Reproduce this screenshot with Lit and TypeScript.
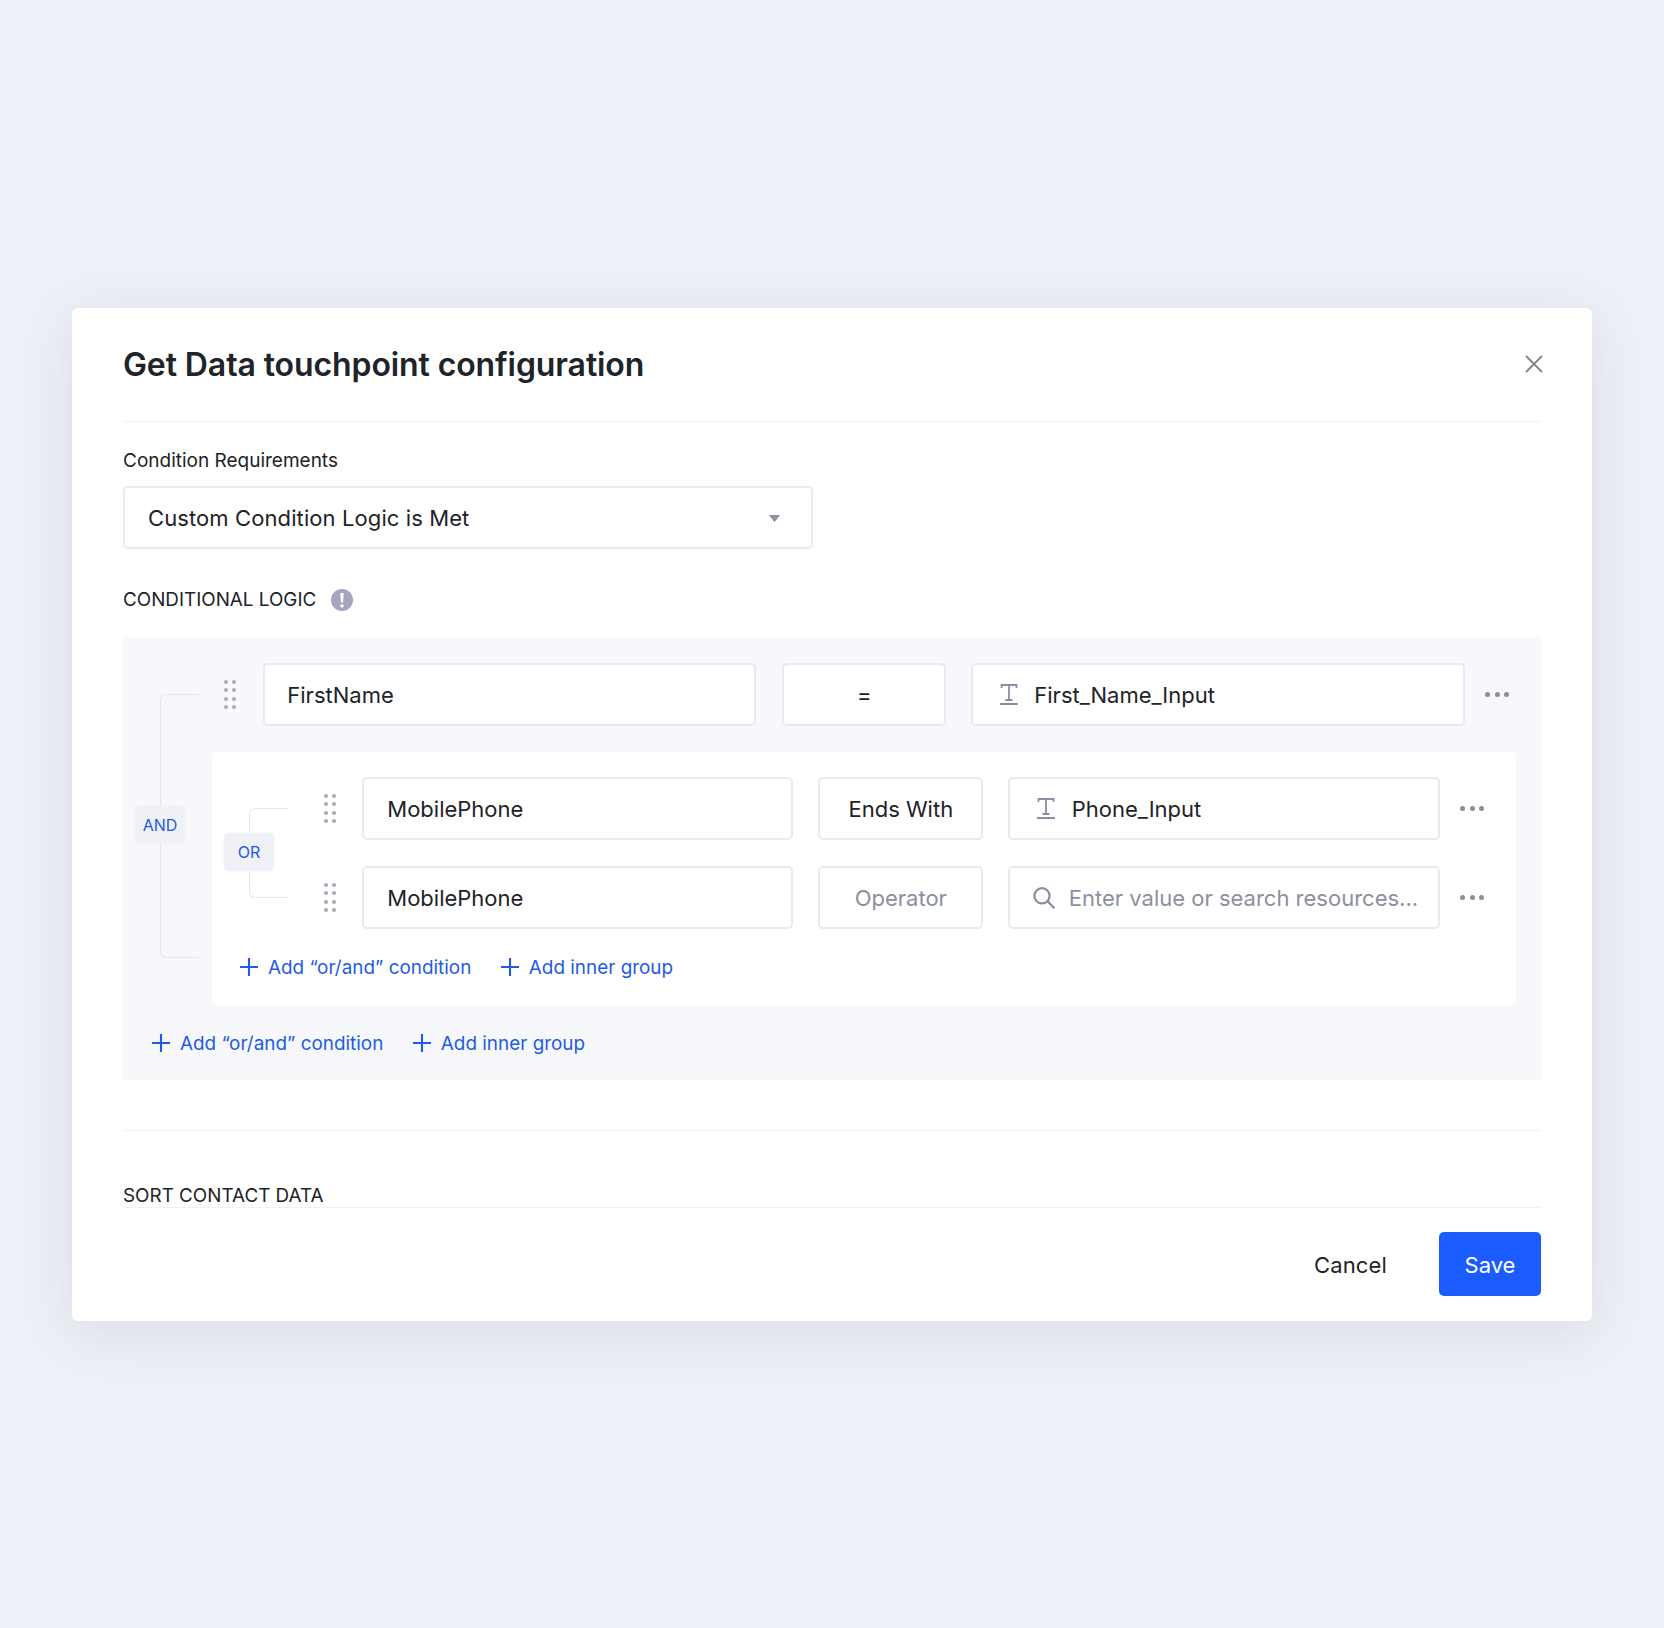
import { LitElement, css, html, svg } from "lit";
import { customElement } from "lit/decorators.js";

type ValueKind = "text" | "search";

interface Condition {
  field: string;
  operator: string;
  operatorEmpty?: boolean;
  value: string;
  kind: ValueKind;
}

const ROOT_CONDITION: Condition = {
  field: "FirstName",
  operator: "=",
  value: "First_Name_Input",
  kind: "text",
};

const GROUP_CONDITIONS: Condition[] = [
  {
    field: "MobilePhone",
    operator: "Ends With",
    value: "Phone_Input",
    kind: "text",
  },
  {
    field: "MobilePhone",
    operator: "Operator",
    operatorEmpty: true,
    value: "Enter value or search resources...",
    kind: "search",
  },
];

const textIcon = html`<svg class="value-icon" width="18" height="21" viewBox="0 0 18 21">
  ${svg`<path d="M1.5 4V1h15v3M9 1V16M5.5 16h7" fill="none" stroke="#8b8da3" stroke-width="1.8"/>
  <path d="M0 20h18" stroke="#8b8da3" stroke-width="2"/>`}
</svg>`;

const searchIcon = html`<svg class="value-icon" width="23" height="22" viewBox="0 0 23 22">
  ${svg`<circle cx="9" cy="8.8" r="7.6" fill="none" stroke="#8b8da3" stroke-width="2.2"/>
  <path d="M14.6 14.2l6.8 7" fill="none" stroke="#8b8da3" stroke-width="2.3"/>`}
</svg>`;

const plusIcon = html`<svg class="plus" width="18" height="18" viewBox="0 0 18 18">
  ${svg`<path d="M9 0v18M0 9h18" fill="none" stroke="#1f5be3" stroke-width="2.1"/>`}
</svg>`;

@customElement("app-root")
export class AppRoot extends LitElement {
  static styles = css`
    :host {
      display: block;
      min-height: 1628px;
      box-sizing: border-box;
      padding: 308px 72px 0;
      background: #edf0f7;
      font-family: Inter, "Liberation Sans", sans-serif;
      color: #202327;
    }
    .modal {
      height: 1013px;
      box-sizing: border-box;
      padding: 0 51px;
      background: #fff;
      border-radius: 6px;
      box-shadow: 0 12px 56px rgba(70, 70, 70, 0.11);
    }
    .header {
      display: flex;
      align-items: center;
      justify-content: space-between;
      height: 113px;
      border-bottom: 1px solid #eff0f3;
    }
    h1 {
      margin: 0;
      font-size: 32px;
      line-height: 40px;
      font-weight: 600;
      letter-spacing: -0.1px;
    }
    .close {
      margin: 0 -2px 1px 0;
    }
    .label {
      font-size: 19px;
      line-height: 24px;
    }
    .requirements {
      margin-top: 27px;
    }
    .select {
      display: flex;
      align-items: center;
      justify-content: space-between;
      box-sizing: border-box;
      width: 690px;
      height: 63px;
      margin-top: 13px;
      padding: 1px 31px 0 23px;
      border: 2px solid #e8eaee;
      border-radius: 5px;
      font-size: 22px;
      letter-spacing: 0.1px;
    }
    .logic-title {
      display: flex;
      align-items: center;
      gap: 15px;
      margin-top: 39px;
      font-size: 18.85px;
    }
    .info {
      display: flex;
      align-items: center;
      justify-content: center;
      width: 22px;
      height: 22px;
      border-radius: 50%;
      background: #a3a6be;
    }
    .panel {
      position: relative;
      margin-top: 26px;
      padding: 25px 0 25px 29px;
      height: 442px;
      box-sizing: border-box;
      background: #f7f8fb;
      border-radius: 4px;
    }
    .panel-body {
      margin-left: 60px;
      margin-right: 25px;
    }
    .row {
      display: flex;
      align-items: center;
      height: 63px;
    }
    .row.root {
      margin-left: 12px;
    }
    .row.nested {
      margin-left: 84px;
    }
    .row.nested + .row.nested {
      margin-top: 26px;
    }
    .drag {
      flex: none;
      display: grid;
      grid-template-columns: 4px 4px;
      gap: 4.6px 4.3px;
      margin-right: 27px;
    }
    .nested .drag {
      margin-right: 26px;
    }
    .drag i {
      width: 4px;
      height: 4px;
      border-radius: 50%;
      background: #a9abb5;
    }
    .field,
    .operator,
    .value {
      flex: none;
      box-sizing: border-box;
      height: 100%;
      display: flex;
      align-items: center;
      background: #fff;
      border: 2px solid #e8eaee;
      border-radius: 5px;
      font-size: 22px;
      white-space: nowrap;
    }
    .field {
      padding-left: 22px;
    }
    .nested .field {
      padding-left: 23px;
    }
    .operator {
      justify-content: center;
    }
    .operator.empty,
    .value.search {
      color: #8d8f9f;
    }
    .value {
      padding-left: 26.5px;
      gap: 17px;
    }
    .root .value {
      gap: 16.5px;
    }
    .value.search {
      padding-left: 22.5px;
      gap: 13px;
    }
    .root .field {
      width: 493px;
    }
    .root .operator {
      width: 164px;
      margin: 0 25px 0 26px;
    }
    .root .value {
      width: 494px;
    }
    .nested .field {
      width: 431px;
    }
    .nested .operator {
      width: 165px;
      margin: 0 25px;
    }
    .nested .value {
      width: 432px;
    }
    .more {
      flex: none;
      display: flex;
      justify-content: space-between;
      width: 24px;
      margin-left: 20px;
    }
    .more i {
      width: 5px;
      height: 5px;
      border-radius: 50%;
      background: #8b8d9c;
    }
    .group {
      position: relative;
      margin-top: 26px;
      padding: 25px 0 26px 28px;
      background: #fff;
      border-radius: 4px;
    }
    .actions {
      display: flex;
      align-items: center;
      height: 24px;
      gap: 29.5px;
      color: #1f5be3;
      font-size: 18.9px;
    }
    .group .actions {
      margin-top: 26px;
    }
    .panel-body + .actions {
      margin-top: 26px;
    }
    .action {
      display: flex;
      align-items: center;
      gap: 10px;
    }
    .rail {
      position: absolute;
      left: 37px;
      top: 56px;
      width: 39px;
      box-sizing: border-box;
      border: 1.5px solid #e4e6ec;
      border-right: 0;
      border-radius: 6px 0 0 6px;
    }
    .rail.outer {
      height: 264px;
    }
    .rail.inner {
      height: 90px;
    }
    .badge {
      position: absolute;
      left: -1px;
      top: calc(50% - 1px);
      transform: translate(-50%, -50%);
      display: flex;
      align-items: center;
      justify-content: center;
      height: 38px;
      width: 50px;
      border-radius: 5px;
      background: #eff1f6;
      color: #1f5be3;
      font-size: 16px;
      box-shadow: 0 0 3px #eff1f6;
    }
    .section-end {
      height: 1px;
      margin-top: 50px;
      background: #eff0f3;
    }
    .sort {
      margin-top: 53px;
      height: 23px;
      overflow: hidden;
      font-size: 18.85px;
    }
    .footer {
      display: flex;
      align-items: center;
      justify-content: flex-end;
      gap: 52px;
      height: 64px;
      padding-top: 24px;
      border-top: 1px solid #eff0f3;
    }
    .cancel {
      padding-top: 1px;
      font-size: 22px;
      letter-spacing: 0.15px;
    }
    .save {
      display: flex;
      align-items: center;
      justify-content: center;
      box-sizing: border-box;
      width: 102px;
      height: 64px;
      padding-top: 1px;
      border-radius: 5px;
      background: #1a5cff;
      color: #fff;
      font-size: 22px;
    }
  `;

  private renderDrag() {
    return html`<div class="drag">
      ${Array.from({ length: 8 }, () => html`<i></i>`)}
    </div>`;
  }

  private renderCondition(condition: Condition, variant: string) {
    const isSearch = condition.kind === "search";
    return html`
      <div class="row ${variant}">
        ${this.renderDrag()}
        <div class="field">${condition.field}</div>
        <div class="operator ${condition.operatorEmpty ? "empty" : ""}">
          ${condition.operator}
        </div>
        <div class="value ${isSearch ? "search" : ""}">
          ${isSearch ? searchIcon : textIcon}<span>${condition.value}</span>
        </div>
        <div class="more"><i></i><i></i><i></i></div>
      </div>
    `;
  }

  private renderActions() {
    return html`
      <div class="actions">
        <span class="action">${plusIcon}Add “or/and” condition</span>
        <span class="action">${plusIcon}Add inner group</span>
      </div>
    `;
  }

  render() {
    return html`
      <div class="modal">
        <div class="header">
          <h1>Get Data touchpoint configuration</h1>
          <svg class="close" width="18" height="18" viewBox="0 0 18 18">
            <path d="M1 1l16 16M17 1L1 17" fill="none" stroke="#85878f" stroke-width="2" />
          </svg>
        </div>

        <div class="label requirements">Condition Requirements</div>
        <div class="select">
          <span>Custom Condition Logic is Met</span>
          <svg width="11" height="7" viewBox="0 0 11 7">
            <path d="M0.8 0.5h9.4L5.5 6.5z" fill="#8d90a3" stroke="#8d90a3" stroke-linejoin="round" />
          </svg>
        </div>

        <div class="label logic-title">
          <span>CONDITIONAL LOGIC</span>
          <span class="info">
            <svg width="6" height="16" viewBox="0 0 6 16">
              <path d="M1.2 1h3.6L4 10.5H2zM3 12.2a1.7 1.7 0 1 0 0 3.4A1.7 1.7 0 0 0 3 12.2z" fill="#fff" />
            </svg>
          </span>
        </div>

        <div class="panel">
          <div class="rail outer"><span class="badge">AND</span></div>
          <div class="panel-body">
            ${this.renderCondition(ROOT_CONDITION, "root")}
            <div class="group">
              <div class="rail inner"><span class="badge">OR</span></div>
              ${GROUP_CONDITIONS.map((c) => this.renderCondition(c, "nested"))}
              ${this.renderActions()}
            </div>
          </div>
          ${this.renderActions()}
        </div>

        <div class="section-end"></div>
        <div class="label sort">SORT CONTACT DATA</div>

        <div class="footer">
          <span class="cancel">Cancel</span>
          <span class="save">Save</span>
        </div>
      </div>
    `;
  }
}

declare global {
  interface HTMLElementTagNameMap {
    "app-root": AppRoot;
  }
}
